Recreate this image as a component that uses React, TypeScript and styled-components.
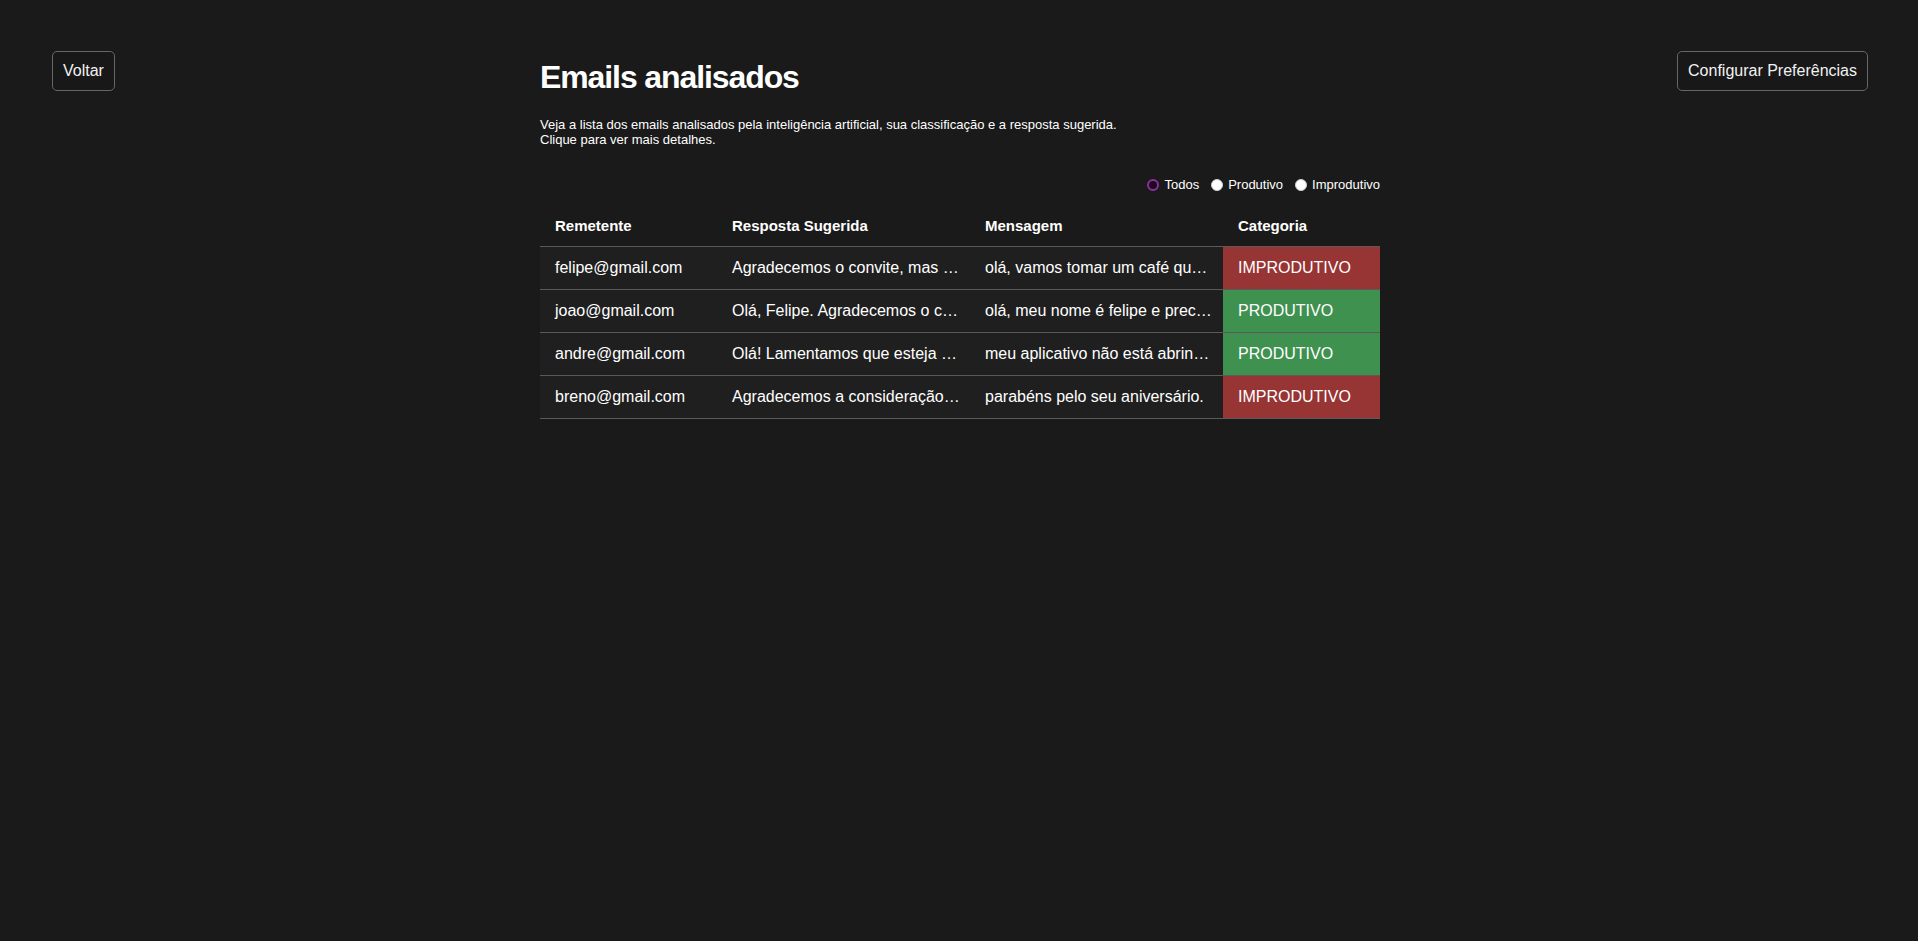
import styled, { createGlobalStyle } from "styled-components";

const GlobalStyle = createGlobalStyle`
  html, body {
    margin: 0;
    padding: 0;
    background: #1a1a1a;
    color: #ffffff;
    font-family: "Liberation Sans", Arial, sans-serif;
  }
`

const Page = styled.div`
  min-height: 941px;
  display: grid;
  grid-template-columns: 1fr 840px 1fr;
  align-items: start;
  padding: 51px 50px 0 52px;
  box-sizing: border-box;
`

const NavButton = styled.button<{ side: "left" | "right" }>`
  justify-self: ${(props) => (props.side === "left" ? "start" : "end")};
  height: 40px;
  padding: 0 10px;
  background: #181818;
  color: #f2f2f2;
  border: 1px solid #666666;
  border-radius: 5px;
  font-family: "Liberation Sans", Arial, sans-serif;
  font-size: 16px;
  cursor: pointer;
`

const Main = styled.main`
  display: flex;
  flex-direction: column;
  padding-top: 8px;
`

const Title = styled.h1`
  margin: 0;
  font-size: 32px;
  line-height: 37px;
  font-weight: bold;
  letter-spacing: -1.1px;
`

const Subtitle = styled.p`
  margin: 21px 0 0;
  font-size: 13px;
  line-height: 15px;
`

const Filters = styled.div`
  display: flex;
  justify-content: flex-end;
  align-items: center;
  gap: 12px;
  margin-top: 30px;
  font-size: 13px;
`

const FilterLabel = styled.label`
  display: flex;
  align-items: center;
  gap: 5px;
  cursor: pointer;
`

const Radio = styled.input`
  appearance: none;
  margin: 0;
  width: 12px;
  height: 12px;
  border-radius: 50%;
  background: #ffffff;
  border: 1px solid #d0d0d0;
  box-sizing: border-box;

  &:checked {
    background: #1a0a1c;
    border: 2.5px solid #8e2ea0;
  }
`

const Table = styled.table`
  width: 840px;
  margin-top: 14px;
  border-collapse: collapse;
  table-layout: fixed;
  font-size: 16px;
`

const HeadCell = styled.th`
  text-align: left;
  font-size: 15px;
  font-weight: bold;
  padding: 11px 15px 12px;
  border-bottom: 1px solid #5a5a5a;
`

const Row = styled.tr`
  background: #1f1f1f;
  border-bottom: 1px solid #5a5a5a;
  cursor: pointer;
`

const Cell = styled.td`
  height: 42px;
  padding: 0 9px 0 15px;
  white-space: nowrap;
  overflow: hidden;
  text-overflow: ellipsis;
`

const CategoryCell = styled(Cell)<{ productive: boolean }>`
  background: ${(props) => (props.productive ? "#3f9150" : "#973434")};
`

const emails = [
  {
    from: "felipe@gmail.com",
    reply: "Agradecemos o convite, mas no momento não podemos participar.",
    message: "olá, vamos tomar um café qualquer dia desses?",
    productive: false,
  },
  {
    from: "joao@gmail.com",
    reply: "Olá, Felipe. Agradecemos o contato e vamos verificar.",
    message: "olá, meu nome é felipe e preciso de ajuda com meu pedido",
    productive: true,
  },
  {
    from: "andre@gmail.com",
    reply: "Olá! Lamentamos que esteja enfrentando problemas com o aplicativo.",
    message: "meu aplicativo não está abrindo desde ontem",
    productive: true,
  },
  {
    from: "breno@gmail.com",
    reply: "Agradecemos a consideração e a mensagem.",
    message: "parabéns pelo seu aniversário.",
    productive: false,
  },
]

const App = () => {
  return (
    <>
      <GlobalStyle />
      <Page>
        <NavButton side="left">Voltar</NavButton>
        <Main>
          <Title>Emails analisados</Title>
          <Subtitle>
            Veja a lista dos emails analisados pela inteligência artificial, sua classificação e a resposta sugerida.
            <br />
            Clique para ver mais detalhes.
          </Subtitle>
          <Filters>
            <FilterLabel>
              <Radio type="radio" name="filtro" defaultChecked />
              Todos
            </FilterLabel>
            <FilterLabel>
              <Radio type="radio" name="filtro" />
              Produtivo
            </FilterLabel>
            <FilterLabel>
              <Radio type="radio" name="filtro" />
              Improdutivo
            </FilterLabel>
          </Filters>
          <Table>
            <colgroup>
              <col style={{ width: 177 }} />
              <col style={{ width: 253 }} />
              <col style={{ width: 253 }} />
              <col style={{ width: 157 }} />
            </colgroup>
            <thead>
              <tr>
                <HeadCell>Remetente</HeadCell>
                <HeadCell>Resposta Sugerida</HeadCell>
                <HeadCell>Mensagem</HeadCell>
                <HeadCell>Categoria</HeadCell>
              </tr>
            </thead>
            <tbody>
              {emails.map((email) => (
                <Row key={email.from}>
                  <Cell>{email.from}</Cell>
                  <Cell>{email.reply}</Cell>
                  <Cell>{email.message}</Cell>
                  <CategoryCell productive={email.productive}>
                    {email.productive ? "PRODUTIVO" : "IMPRODUTIVO"}
                  </CategoryCell>
                </Row>
              ))}
            </tbody>
          </Table>
        </Main>
        <NavButton side="right">Configurar Preferências</NavButton>
      </Page>
    </>
  )
}

export default App;
